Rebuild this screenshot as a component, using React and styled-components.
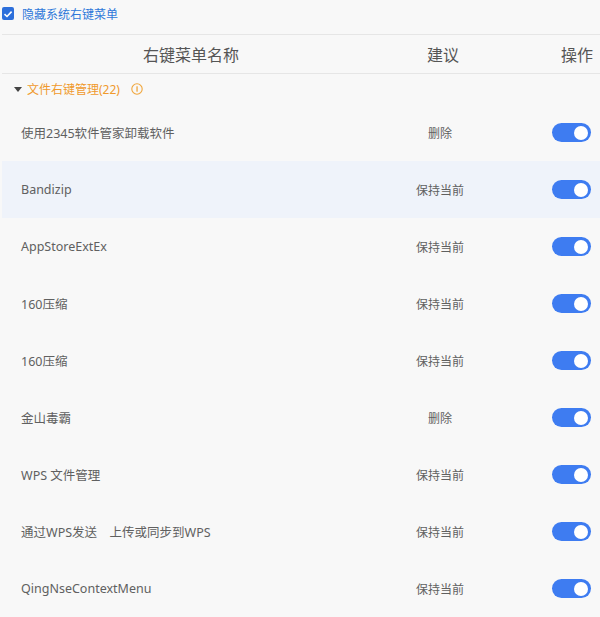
import React from "react";
import styled, { createGlobalStyle } from "styled-components";

const GlobalStyle = createGlobalStyle`
	html, body {
		margin: 0;
		padding: 0;
		background: #f8f8f8;
	}
	body {
		font-family: "Noto Sans", "Noto Sans CJK SC", sans-serif;
	}
`;

const Page = styled.div`
	width: 600px;
	height: 617px;
	overflow: hidden;
	background: #f8f8f8;
`;

const TopBar = styled.div`
	height: 35px;
	margin-left: 2px;
	display: flex;
	align-items: center;
	gap: 8px;
	border-bottom: 1px solid #e6e6e6;
	box-sizing: border-box;
`;

const CheckBox = styled.span`
	width: 12px;
	height: 13px;
	border-radius: 2px;
	background: #2d6fdb;
	display: flex;
	align-items: center;
	justify-content: center;
	margin-top: -7px;
`;

const TopLabel = styled.span`
	font-size: 12px;
	color: #2f78da;
	margin-top: -7px;
`;

const Grid = styled.div`
	display: grid;
	grid-template-columns: 1fr 120px 100px;
	align-items: center;
	margin-left: 2px;
`;

const HeaderRow = styled(Grid)`
	height: 39px;
	border-bottom: 1px solid #e6e6e6;
	box-sizing: border-box;
	font-size: 16px;
	color: #555;
`;

const HeadCell = styled.div`
	text-align: ${(p) => p.$align || "center"};
	padding-right: ${(p) => (p.$align === "right" ? "7px" : "0")};
	padding-left: ${(p) => (p.$shift ? "6px" : "0")};
`;

const GroupRow = styled.div`
	height: 30px;
	display: flex;
	align-items: center;
	padding-left: 14px;
	font-size: 12px;
	color: #f09a2c;
`;

const Caret = styled.span`
	width: 0;
	height: 0;
	border-left: 4px solid transparent;
	border-right: 4px solid transparent;
	border-top: 5px solid #444;
	margin-right: 5px;
`;

const InfoIcon = styled.span`
	margin-left: 11px;
	display: flex;
`;

const Row = styled(Grid)`
	height: 57px;
	background: ${(p) => (p.$active ? "#eff3fa" : "transparent")};
	font-size: 12px;
	color: #606060;
`;

const NameCell = styled.div`
	padding-left: 19px;
	font-size: 12.5px;
`;

const AdviceCell = styled.div`
	text-align: center;
`;

const ActionCell = styled.div`
	display: flex;
	justify-content: flex-end;
	padding-right: 9px;
`;

const Toggle = styled.span`
	width: 39px;
	height: 19px;
	border-radius: 10px;
	background: ${(p) => (p.$on ? "#3e7cf1" : "#c8c8c8")};
	display: flex;
	align-items: center;
	justify-content: ${(p) => (p.$on ? "flex-end" : "flex-start")};
	padding: 0 3px;
	box-sizing: border-box;
`;

const Knob = styled.span`
	width: 14px;
	height: 14px;
	border-radius: 50%;
	background: #fff;
`;

const items = [
	{ name: "使用2345软件管家卸载软件", advice: "删除" },
	{ name: "Bandizip", advice: "保持当前", active: true },
	{ name: "AppStoreExtEx", advice: "保持当前" },
	{ name: "160压缩", advice: "保持当前" },
	{ name: "160压缩", advice: "保持当前" },
	{ name: "金山毒霸", advice: "删除" },
	{ name: "WPS 文件管理", advice: "保持当前" },
	{ name: "通过WPS发送\u3000上传或同步到WPS", advice: "保持当前" },
	{ name: "QingNseContextMenu", advice: "保持当前" },
];

const App = () => (
	<Page>
		<GlobalStyle />
		<TopBar>
			<CheckBox>
				<svg width="10" height="10" viewBox="0 0 10 10">
					<path d="M1.5 5.2 L4 7.5 L8.6 2.6" stroke="#fff" strokeWidth="1.6" fill="none" />
				</svg>
			</CheckBox>
			<TopLabel>隐藏系统右键菜单</TopLabel>
		</TopBar>
		<HeaderRow>
			<HeadCell>右键菜单名称</HeadCell>
			<HeadCell $shift>建议</HeadCell>
			<HeadCell $align="right">操作</HeadCell>
		</HeaderRow>
		<GroupRow>
			<Caret />
			文件右键管理(22)
			<InfoIcon>
				<svg width="12" height="12" viewBox="0 0 12 12">
					<circle cx="6" cy="6" r="5.2" stroke="#f0a63c" strokeWidth="1.1" fill="none" />
					<rect x="5.4" y="3.3" width="1.3" height="5.4" fill="#f0a63c" />
				</svg>
			</InfoIcon>
		</GroupRow>
		{items.map((it, i) => (
			<Row key={i} $active={it.active}>
				<NameCell>{it.name}</NameCell>
				<AdviceCell>{it.advice}</AdviceCell>
				<ActionCell>
					<Toggle $on>
						<Knob />
					</Toggle>
				</ActionCell>
			</Row>
		))}
	</Page>
);

export default App;
